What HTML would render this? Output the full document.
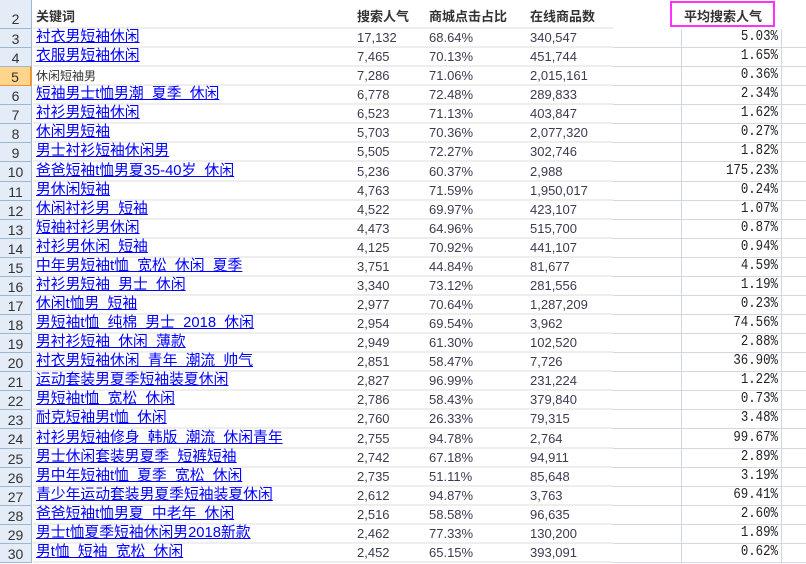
<!DOCTYPE html>
<html><head><meta charset="utf-8"><style>
body{margin:0;width:806px;height:563px;overflow:hidden;background:#fff;position:relative;font-family:"Liberation Sans","Noto Sans CJK SC",sans-serif}
.rh{position:absolute;left:0;width:32px;background:#e4ecf7;border-right:1px solid #9eb6ce;border-bottom:1px solid #9eb6ce;box-sizing:border-box;text-align:center;font-size:14px;color:#333;}
.r{position:absolute;left:33px;width:773px;box-sizing:border-box}
.g{position:absolute;left:0;width:580px;height:2px;background:#eeeeee;bottom:0}
.b{position:absolute;left:580px;width:193px;height:1px;background:#d0d7e5;bottom:0}
.c{position:absolute;white-space:pre;bottom:2px}
.k{left:3px;font-size:14.8px;color:#0000ff;text-decoration:underline;font-family:"Liberation Sans","WenQuanYi Zen Hei",sans-serif}
.k5{left:3px;font-size:12px;color:#333}
.n{font-size:13px;color:#3c3c50;bottom:3px}
.e{right:28px;font-family:"Liberation Mono",monospace;font-size:12.4px;color:#222;bottom:3px;transform:scaleY(1.2);transform-origin:bottom}
.h{font-size:13px;font-weight:bold;color:#333;position:absolute;top:6px}
.vl{position:absolute;top:29px;bottom:0;width:1px;background:#d0d7e5}
</style></head><body>
<div class="rh" style="top:0;height:29px;line-height:38px">2</div>
<div class="h" style="left:36px">关键词</div>
<div class="h" style="left:357px">搜索人气</div>
<div class="h" style="left:429px">商城点击占比</div>
<div class="h" style="left:530px">在线商品数</div>
<div style="position:absolute;left:670px;top:1px;width:101px;height:22px;border:2px solid #ff33ff"></div>
<div class="h" style="left:684px">平均搜索人气</div>
<div style="position:absolute;left:33px;top:27px;width:580px;height:2px;background:#eee"></div>
<div class="vl" style="left:681px"></div><div class="vl" style="left:781px"></div>
<div id="rows"></div>
<script>
var d=[
[3,"衬衣男短袖休闲","17,132","68.64%","340,547","5.03%"],
[4,"衣服男短袖休闲","7,465","70.13%","451,744","1.65%"],
[5,"休闲短袖男","7,286","71.06%","2,015,161","0.36%"],
[6,"短袖男士t恤男潮  夏季  休闲","6,778","72.48%","289,833","2.34%"],
[7,"衬衫男短袖休闲","6,523","71.13%","403,847","1.62%"],
[8,"休闲男短袖","5,703","70.36%","2,077,320","0.27%"],
[9,"男士衬衫短袖休闲男","5,505","72.27%","302,746","1.82%"],
[10,"爸爸短袖t恤男夏35-40岁  休闲","5,236","60.37%","2,988","175.23%"],
[11,"男休闲短袖","4,763","71.59%","1,950,017","0.24%"],
[12,"休闲衬衫男  短袖","4,522","69.97%","423,107","1.07%"],
[13,"短袖衬衫男休闲","4,473","64.96%","515,700","0.87%"],
[14,"衬衫男休闲  短袖","4,125","70.92%","441,107","0.94%"],
[15,"中年男短袖t恤  宽松  休闲  夏季","3,751","44.84%","81,677","4.59%"],
[16,"衬衫男短袖  男士  休闲","3,340","73.12%","281,556","1.19%"],
[17,"休闲t恤男  短袖","2,977","70.64%","1,287,209","0.23%"],
[18,"男短袖t恤  纯棉  男士  2018  休闲","2,954","69.54%","3,962","74.56%"],
[19,"男衬衫短袖  休闲  薄款","2,949","61.30%","102,520","2.88%"],
[20,"衬衣男短袖休闲  青年  潮流  帅气","2,851","58.47%","7,726","36.90%"],
[21,"运动套装男夏季短袖装夏休闲","2,827","96.99%","231,224","1.22%"],
[22,"男短袖t恤  宽松  休闲","2,786","58.43%","379,840","0.73%"],
[23,"耐克短袖男t恤  休闲","2,760","26.33%","79,315","3.48%"],
[24,"衬衫男短袖修身  韩版  潮流  休闲青年","2,755","94.78%","2,764","99.67%"],
[25,"男士休闲套装男夏季  短裤短袖","2,742","67.18%","94,911","2.89%"],
[26,"男中年短袖t恤  夏季  宽松  休闲","2,735","51.11%","85,648","3.19%"],
[27,"青少年运动套装男夏季短袖装夏休闲","2,612","94.87%","3,763","69.41%"],
[28,"爸爸短袖t恤男夏  中老年  休闲","2,516","58.58%","96,635","2.60%"],
[29,"男士t恤夏季短袖休闲男2018新款","2,462","77.33%","130,200","1.89%"],
[30,"男t恤  短袖  宽松  休闲","2,452","65.15%","393,091","0.62%"]];
var h="";
d.forEach(function(r,i){
 var t=29+i*19.07;
 var st=r[0]==5?"background:#ffd58b;border-color:#f29436;border-right:2px solid #f29436;":"";
 h+='<div class="rh" style="top:'+t+'px;height:19.07px;line-height:20px;'+st+'">'+r[0]+'</div>';
 h+='<div class="r" style="top:'+t+'px;height:19.07px"><div class="g"></div><div class="b"></div>'+
 '<div class="c '+(r[0]==5?'k5':'k')+'">'+r[1]+'</div>'+
 '<div class="c n" style="left:324px">'+r[2]+'</div>'+
 '<div class="c n" style="left:396px">'+r[3]+'</div>'+
 '<div class="c n" style="left:497px">'+r[4]+'</div>'+
 '<div class="c e">'+r[5]+'</div></div>';
});
document.getElementById("rows").innerHTML=h;
</script>
</body></html>
